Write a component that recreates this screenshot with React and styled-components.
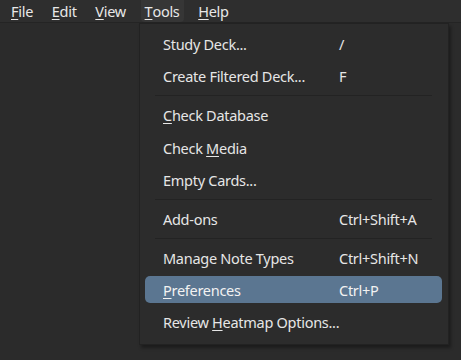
import React from "react";
import styled, { createGlobalStyle } from "styled-components";

const GlobalStyle = createGlobalStyle`
  html, body {
    margin: 0;
    padding: 0;
    background: #2b2b2b;
    width: 461px;
    height: 360px;
    overflow: hidden;
  }
  body {
    font-family: "Noto Sans", "Open Sans", "DejaVu Sans", sans-serif;
    color: #e8e8e8;
  }
`;

const Window = styled.div`
  position: relative;
  width: 461px;
  height: 360px;
  background: #2b2b2b;
`;

const MenuBar = styled.div`
  display: flex;
  align-items: stretch;
  height: 23px;
  padding-left: 7px;
  gap: 10.7px;
  background: #2e2e2e;
  border-bottom: 1px solid #242424;
  box-sizing: border-box;
`;

const BarItem = styled.div`
  display: flex;
  align-items: center;
  padding: 0 4px 1px;
  font-size: 14.5px;
  letter-spacing: -0.28px;
  border-radius: 0 0 4px 4px;
  background: ${(p) => (p.$active ? "#363636" : "transparent")};
`;

const Key = styled.span`
  text-decoration: underline;
  text-underline-offset: 2px;
  text-decoration-thickness: 1px;
`;

const Dropdown = styled.div`
  position: absolute;
  left: 139px;
  top: 23px;
  width: 310px;
  box-sizing: border-box;
  display: flex;
  flex-direction: column;
  gap: 5.4px;
  padding: 6.5px 6px 8.5px 5px;
  background: #2c2c2c;
  border: 1px solid #222222;
  box-shadow: 2px 3px 3px rgba(0, 0, 0, 0.35);
`;

const Item = styled.div`
  display: grid;
  grid-template-columns: 176px 1fr;
  align-items: center;
  height: 27px;
  padding-left: 18px;
  border-radius: 5px;
  font-size: 14.5px;
  letter-spacing: -0.28px;
  white-space: nowrap;
  background: ${(p) => (p.$selected ? "#5b7691" : "transparent")};
  color: ${(p) => (p.$selected ? "#f2f2f2" : "#e6e6e6")};
`;

const Label = styled.span``;

const Shortcut = styled.span``;

const Separator = styled.div`
  height: 1px;
  margin: 0 10px;
  background: #232323;
`;

function Mn({ k, rest, pre = "" }) {
  return (
    <>
      {pre}
      <Key>{k}</Key>
      {rest}
    </>
  );
}

export default function App() {
  return (
    <Window>
      <GlobalStyle />
      <MenuBar>
        <BarItem><Mn k="F" rest="ile" /></BarItem>
        <BarItem><Mn k="E" rest="dit" /></BarItem>
        <BarItem><Mn k="V" rest="iew" /></BarItem>
        <BarItem $active><Mn k="T" rest="ools" /></BarItem>
        <BarItem><Mn k="H" rest="elp" /></BarItem>
      </MenuBar>
      <Dropdown>
        <Item><Label>Study Deck...</Label><Shortcut>/</Shortcut></Item>
        <Item><Label>Create Filtered Deck...</Label><Shortcut>F</Shortcut></Item>
        <Separator />
        <Item><Label><Mn k="C" rest="heck Database" /></Label><Shortcut /></Item>
        <Item><Label><Mn pre="Check " k="M" rest="edia" /></Label><Shortcut /></Item>
        <Item><Label>Empty Cards...</Label><Shortcut /></Item>
        <Separator />
        <Item><Label>Add-ons</Label><Shortcut>Ctrl+Shift+A</Shortcut></Item>
        <Separator />
        <Item><Label>Manage Note Types</Label><Shortcut>Ctrl+Shift+N</Shortcut></Item>
        <Item $selected><Label><Mn k="P" rest="references" /></Label><Shortcut>Ctrl+P</Shortcut></Item>
        <Item><Label><Mn pre="Review " k="H" rest="eatmap Options..." /></Label><Shortcut /></Item>
      </Dropdown>
    </Window>
  );
}
